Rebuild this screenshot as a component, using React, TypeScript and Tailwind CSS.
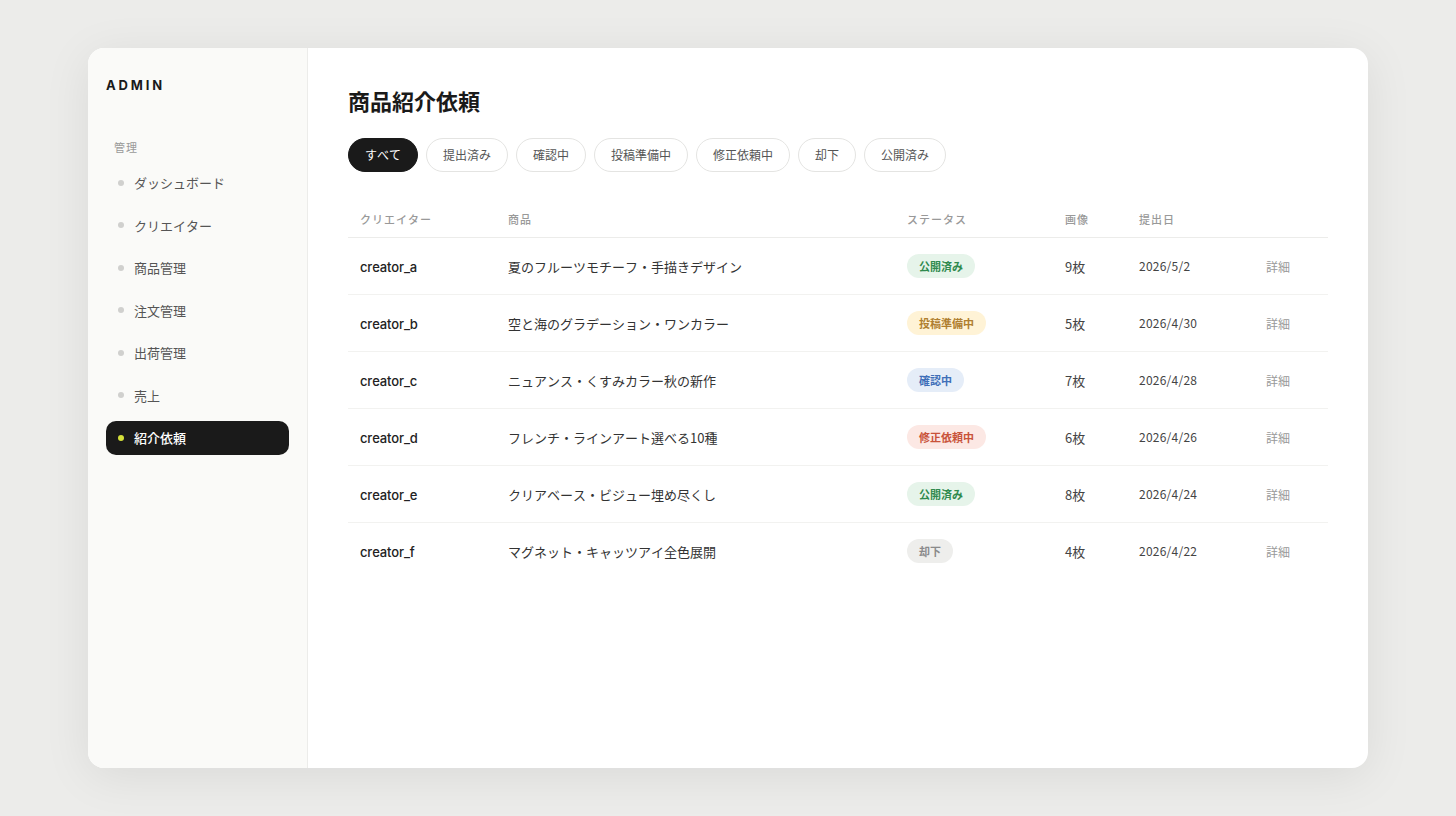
const font = 'font-["Noto_Sans_CJK_JP",sans-serif] [font-kerning:none]'

const navItems = ['ダッシュボード', 'クリエイター', '商品管理', '注文管理', '出荷管理', '売上', '紹介依頼']
const filters = ['すべて', '提出済み', '確認中', '投稿準備中', '修正依頼中', '却下', '公開済み']

const statusStyles: Record<string, string> = {
  公開済み: 'bg-[#e6f4ea] text-[#2f8a4e]',
  投稿準備中: 'bg-[#fff3d6] text-[#b07f30]',
  確認中: 'bg-[#e5edf8] text-[#3f6fb8]',
  修正依頼中: 'bg-[#fce8e4] text-[#c9533a]',
  却下: 'bg-[#eeeeec] text-[#8a8a8a]',
}

const rows = [
  ['creator_a', '夏のフルーツモチーフ・手描きデザイン', '公開済み', '9枚', '2026/5/2'],
  ['creator_b', '空と海のグラデーション・ワンカラー', '投稿準備中', '5枚', '2026/4/30'],
  ['creator_c', 'ニュアンス・くすみカラー秋の新作', '確認中', '7枚', '2026/4/28'],
  ['creator_d', 'フレンチ・ラインアート選べる10種', '修正依頼中', '6枚', '2026/4/26'],
  ['creator_e', 'クリアベース・ビジュー埋め尽くし', '公開済み', '8枚', '2026/4/24'],
  ['creator_f', 'マグネット・キャッツアイ全色展開', '却下', '4枚', '2026/4/22'],
]

const cols = 'grid grid-cols-[148px_399px_158px_74px_127px_74px]'

function Sidebar() {
  return (
    <aside className="w-[220px] shrink-0 border-r border-[#ececea] bg-[#fafaf8] px-[18px] pt-[28px]">
      <div className='font-["Inter",sans-serif] text-[13px] leading-[18px] font-bold tracking-[0.22em] text-[#1a1a1a]'>ADMIN</div>
      <div className="mt-[44px] mb-[9.5px] px-2 text-[11px] leading-[18px] tracking-[1px] text-[#999999]">管理</div>
      <nav className="flex w-[183px] flex-col gap-2">
        {navItems.map((item) => {
          const active = item === '紹介依頼'
          return (
            <div
              key={item}
              className={`flex h-[34.5px] items-center gap-[10px] rounded-[10px] px-3 text-[13px] ${
                active ? 'bg-[#1a1a1a] font-medium text-white' : 'text-[#555555]'
              }`}
            >
              <span className={`size-[6px] rounded-full ${active ? 'bg-[#d4e03a]' : 'bg-[#d0d0ce]'}`} />
              {item}
            </div>
          )
        })}
      </nav>
    </aside>
  )
}

export default function App() {
  return (
    <div className={`${font} flex h-[816px] items-center justify-center overflow-hidden bg-[#ececea]`}>
      <div className="flex h-[720px] w-[1280px] overflow-hidden rounded-2xl bg-white shadow-[0_8px_48px_rgba(0,0,0,0.08)]">
        <Sidebar />
        <main className="flex-1 px-10 pt-[36px]">
          <h1 className="text-[22px] leading-[32px] font-bold text-[#1a1a1a]">商品紹介依頼</h1>
          <div className="mt-[22px] flex gap-2">
            {filters.map((f, i) => (
              <div
                key={f}
                className={`flex h-[33.5px] items-center rounded-full border px-4 text-[12px] ${
                  i === 0 ? 'border-[#1a1a1a] bg-[#1a1a1a] text-white' : 'border-[#e4e4e2] bg-white text-[#555555]'
                }`}
              >
                {f}
              </div>
            ))}
          </div>
          <div className="mt-[32.5px] w-[980px]">
            <div className={`${cols} h-[34px] items-center border-b border-[#ececea] pb-[2px] text-[11px] font-medium tracking-[1px] text-[#999999]`}>
              <div className="px-3">クリエイター</div>
              <div className="px-3">商品</div>
              <div className="px-3">ステータス</div>
              <div className="px-3">画像</div>
              <div className="px-3">提出日</div>
              <div />
            </div>
            {rows.map((r) => (
              <div key={r[0]} className={`${cols} h-[57px] items-center border-b border-[#f2f2f0] last:border-transparent`}>
                <div className='px-3 pt-[4px] font-["Inter",sans-serif] text-[13px] font-medium tracking-[-0.01em] text-[#222222]'>{r[0]}</div>
                <div className="px-3 pt-[1px] text-[13px] text-[#333333]">{r[1]}</div>
                <div className="flex px-3">
                  <span className={`flex h-6 items-center rounded-full px-3 text-[11px] font-semibold ${statusStyles[r[2]]}`}>
                    {r[2]}
                  </span>
                </div>
                <div className="px-3 pt-[1px] text-[13px] text-[#444444]">{r[3]}</div>
                <div className="px-3 text-[12px] tracking-[0.02em] text-[#444444]">{r[4]}</div>
                <div className="px-3 pt-[1px] text-[12px] text-[#999999]">詳細</div>
              </div>
            ))}
          </div>
        </main>
      </div>
    </div>
  )
}
